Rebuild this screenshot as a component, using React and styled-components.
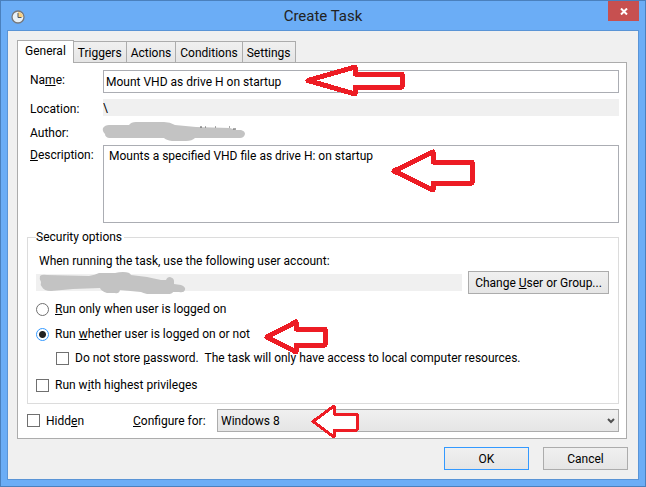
import React from "react";
import styled, { createGlobalStyle, css } from "styled-components";

const GlobalStyle = createGlobalStyle`
	* {
		box-sizing: border-box;
	}

	body {
		margin: 0;
		background: #6badf6;
		color: #000;
		font-family: Roboto, "Open Sans", sans-serif;
		font-size: 12px;
		line-height: 16px;
	}

	button, input, select, textarea {
		font: inherit;
		color: inherit;
		border-radius: 0;
	}
`;

const Window = styled.div`
	display: flex;
	flex-direction: column;
	min-height: 100vh;
	padding: 0 6px 6px;
	background: #6badf6;
	border: 1px solid #4a80bd;
`;

const TitleBar = styled.header`
	display: grid;
	grid-template-columns: 48px 1fr 48px;
	height: 29px;
`;

const TitleIcon = styled.svg`
	align-self: center;
	margin-left: 4px;
	width: 14px;
	height: 14px;
`;

const Title = styled.h1`
	margin: 0;
	font-size: 15px;
	font-weight: 400;
	line-height: 31px;
	text-align: center;
	color: #222;
`;

const CloseButton = styled.button`
	display: flex;
	align-items: center;
	justify-content: center;
	justify-self: end;
	width: 31px;
	height: 20px;
	padding: 0;
	border: 0;
	background: #c75050;
`;

const Client = styled.main`
	flex: 1;
	padding: 9px 11px 9px 9px;
	background: #f0f0f0;
	border: 1px solid #5a94d6;
`;

const TabList = styled.div`
	display: flex;
	align-items: flex-end;
`;

const Tab = styled.button`
	height: 21px;
	padding: 1px 4px 0;
	margin-right: -1px;
	border: 1px solid #acacac;
	border-bottom: 0;
	background: linear-gradient(#f0f0f0, #e5e5e5);
	white-space: nowrap;

	${({ $active }) =>
		$active &&
		css`
			position: relative;
			height: 23px;
			padding: 0 7px 3px;
			margin: 0 -1px -1px 0;
			background: #fff;
			z-index: 1;
		`}
`;

const Panel = styled.section`
	padding: 7px 7px 6px 9px;
	background: #fff;
	border: 1px solid #acacac;
`;

const Fields = styled.div`
	display: grid;
	grid-template-columns: 64px 1fr;
	column-gap: 9px;
	padding-left: 3px;
`;

const FieldLabel = styled.label`
	padding-top: 2px;
`;

const Cell = styled.div`
	position: relative;
	display: flex;
	align-items: flex-start;
	min-height: ${({ $height }) => $height}px;
`;

const TextInput = styled.input`
	width: 100%;
	height: 23px;
	padding: 0 2px;
	border: 1px solid #abadb3;
	background: #fff;
`;

const TextArea = styled.textarea`
	display: block;
	width: 100%;
	height: 78px;
	padding: 2px 5px;
	border: 1px solid #abadb3;
	background: #fff;
	resize: none;
`;

const ReadOnlyInput = styled.input`
	flex: 1;
	min-width: 0;
	height: 17px;
	padding: 0;
	border: 0;
	background: ${({ $plain }) => ($plain ? "#fff" : "#f0f0f0")};
`;

const Overlay = styled.svg`
	position: absolute;
	top: ${({ $top }) => $top}px;
	left: ${({ $left }) => $left}px;
	pointer-events: none;
	z-index: 1;
`;

const Group = styled.fieldset`
	min-width: 0;
	margin: 6px 0 5px;
	padding: 8px 9px 10px 8px;
	border: 1px solid #dcdcdc;
`;

const Legend = styled.legend`
	padding: 0 2px 0 0;
`;

const AccountRow = styled.div`
	position: relative;
	display: flex;
	align-items: center;
	gap: 6px;
	margin: 2px 0 7px;
`;

const AccountLabel = styled.label`
	display: block;
	padding-left: 3px;
`;

const Button = styled.button`
	height: 23px;
	width: ${({ $wide }) => ($wide ? 141 : 85)}px;
	padding: 0;
	border: 1px solid ${({ $primary }) => ($primary ? "#3399ff" : "#acacac")};
	background: linear-gradient(#f0f0f0, #e5e5e5);
	white-space: nowrap;
`;

const Option = styled.div`
	position: relative;
	display: flex;
	align-items: center;
	gap: 6px;
	margin-bottom: ${({ $gap }) => $gap || 0}px;
	padding-left: ${({ $indent }) => ($indent ? 20 : 0)}px;
`;

const CheckBox = styled.input`
	appearance: none;
	width: 13px;
	height: 13px;
	margin: 0;
	border: 1px solid #707070;
	background: #fff;

	&:checked {
		background: #222;
	}
`;

const Radio = styled(CheckBox)`
	border-radius: 50%;

	&:checked {
		border-color: #3399ff;
		background: radial-gradient(circle, #222 3px, #fff 4px);
	}
`;

const BottomRow = styled.div`
	position: relative;
	display: flex;
	align-items: center;
`;

const HiddenOption = styled(Option)`
	width: 106px;
`;

const ConfigureLabel = styled.label`
	width: 84px;
`;

const SelectWrap = styled.div`
	position: relative;
	flex: 1;
`;

const Select = styled.select`
	appearance: none;
	display: block;
	width: 100%;
	height: 23px;
	padding: 0 20px 0 3px;
	border: 1px solid #acacac;
	background: linear-gradient(#f0f0f0, #e5e5e5);
`;

const Chevron = styled.svg`
	position: absolute;
	top: 9px;
	right: 4px;
	pointer-events: none;
`;

const Footer = styled.footer`
	display: flex;
	justify-content: flex-end;
	gap: 14px;
	margin: 8px -1px 0 0;
`;

const tabs = ["General", "Triggers", "Actions", "Conditions", "Settings"];

const Arrow = ({ width, height, points, stroke = 5, top, left }) => (
	<Overlay $top={top} $left={left} width={width} height={height} shapeRendering="crispEdges">
		<polygon points={points} fill="#fff" stroke="#ed1c24" strokeWidth={stroke} strokeLinejoin="round" />
	</Overlay>
);

const App = () => {
	return (
		<>
			<GlobalStyle />
			<Window>
				<TitleBar>
					<TitleIcon viewBox="0 0 14 14">
						<circle cx="7" cy="7" r="6" fill="#e8f1f7" stroke="#77787a" strokeWidth="1.3" />
						<path d="M7 7V2a5 5 0 0 1 5 5z" fill="#f8cf80" />
						<path d="M7 3v4.5h3.5" fill="none" stroke="#4b5866" />
					</TitleIcon>
					<Title>Create Task</Title>
					<CloseButton aria-label="Close">
						<svg width="8" height="7" viewBox="0 0 8 7">
							<path d="M1 .5l6 6M7 .5l-6 6" stroke="#fff" strokeWidth="2" />
						</svg>
					</CloseButton>
				</TitleBar>
				<Client>
					<TabList role="tablist">
						{tabs.map((tab, index) => (
							<Tab key={tab} role="tab" aria-selected={index === 0} $active={index === 0}>
								{tab}
							</Tab>
						))}
					</TabList>
					<Panel>
						<Fields>
							<FieldLabel htmlFor="name">
								Na<u>m</u>e:
							</FieldLabel>
							<Cell $height={29}>
								<TextInput id="name" defaultValue="Mount VHD as drive H on startup" />
								<Arrow
									top={-6}
									left={202}
									width={100}
									height={33}
									points="3,16.5 50,3 50,10 97,10 97,23 50,23 50,30"
								/>
							</Cell>
							<FieldLabel htmlFor="location">Location:</FieldLabel>
							<Cell $height={24}>
								<ReadOnlyInput id="location" readOnly value="\" />
							</Cell>
							<FieldLabel htmlFor="author">Author:</FieldLabel>
							<Cell $height={22}>
								<ReadOnlyInput id="author" $plain readOnly value="" />
								<Overlay $top={-1} $left={-1} width={146} height={20}>
									<path
										d="M1 6Q3 3 7 3L27 3Q29 0 34 0L62 0Q68 0 73 3L94 5L128 6L134 8L139 8Q143 9 143 12Q142 16 138 16L93 16Q90 19 84 19L70 19Q64 18 62 16L7 16Q3 15 3 12Q0 9 1 6Z"
										fill="#c3c3c3"
									/>
									<path d="M98 5h2M103 5h1M113 5h1M127 5h1M131 7h3" stroke="#555" />
								</Overlay>
							</Cell>
							<FieldLabel htmlFor="description">
								<u>D</u>escription:
							</FieldLabel>
							<Cell $height={78}>
								<TextArea id="description" defaultValue="Mounts a specified VHD file as drive H: on startup" />
								<Arrow
									top={4}
									left={288}
									width={84}
									height={44}
									points="3,22 42,3 42,13 81,13 81,34 42,34 42,41"
								/>
							</Cell>
						</Fields>
						<Group>
							<Legend>Security options</Legend>
							<AccountLabel htmlFor="account">
								When running the task, use the following user account:
							</AccountLabel>
							<AccountRow>
								<ReadOnlyInput id="account" readOnly value="" />
								<Overlay $top={1} $left={3} width={148} height={24}>
									<path
										d="M1 4Q3 2 8 3L50 4Q56 3 60 1L76 1Q80 0 84 0Q91 0 92 3L108 5L122 8L127 8Q128 5 131 5Q135 6 135 9L135 12L142 13Q147 15 146 18Q145 21 140 20L134 20Q133 22 129 22L108 22Q104 21 102 20L81 18Q80 22 76 21L68 21Q62 19 61 16L34 17L12 19Q5 19 3 15Q1 13 2 10Q0 7 1 4Z"
										fill="#c3c3c3"
									/>
								</Overlay>
								<Button $wide>
									Change <u>U</u>ser or Group...
								</Button>
							</AccountRow>
							<Option $gap={9}>
								<Radio type="radio" name="run" id="run-logged" />
								<label htmlFor="run-logged">
									<u>R</u>un only when user is logged on
								</label>
							</Option>
							<Option $gap={8}>
								<Radio type="radio" name="run" id="run-any" defaultChecked />
								<label htmlFor="run-any">
									Run <u>w</u>hether user is logged on or not
								</label>
								<Arrow
									top={-7}
									left={228}
									width={64}
									height={36}
									points="3,18 32,3 32,10 61,10 61,26 32,26 32,33"
								/>
							</Option>
							<Option $indent $gap={11}>
								<CheckBox type="checkbox" id="no-password" />
								<label htmlFor="no-password">
									Do not store <u>p</u>assword. &nbsp;The task will only have access to local computer resources.
								</label>
							</Option>
							<Option>
								<CheckBox type="checkbox" id="highest" />
								<label htmlFor="highest">
									Run w<u>i</u>th highest privileges
								</label>
							</Option>
						</Group>
						<BottomRow>
							<HiddenOption>
								<CheckBox type="checkbox" id="hidden" />
								<label htmlFor="hidden">
									Hidd<u>e</u>n
								</label>
							</HiddenOption>
							<ConfigureLabel htmlFor="configure">
								<u>C</u>onfigure for:
							</ConfigureLabel>
							<SelectWrap>
								<Select id="configure">
									<option>Windows 8</option>
								</Select>
								<Chevron width="8" height="6" viewBox="0 0 8 6">
									<path d="M1 1l3 3 3-3" fill="none" stroke="#505050" strokeWidth="2" />
								</Chevron>
								<Arrow
									top={-5}
									left={94}
									width={48}
									height={35}
									stroke={3}
									points="2,17.5 23,2 23,10 46,10 46,26 23,26 23,33"
								/>
							</SelectWrap>
						</BottomRow>
					</Panel>
					<Footer>
						<Button $primary>OK</Button>
						<Button>Cancel</Button>
					</Footer>
				</Client>
			</Window>
		</>
	);
};

export default App;
